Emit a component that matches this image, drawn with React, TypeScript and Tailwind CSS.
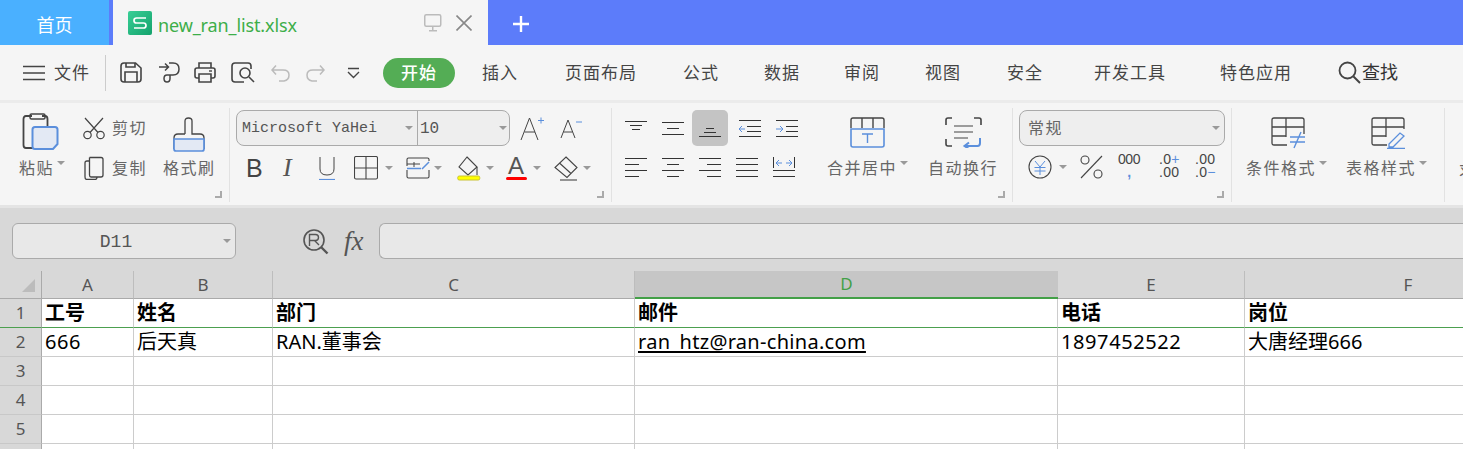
import React from 'react';

const cjk = "font-['Noto_Sans','Noto_Sans_CJK_SC',sans-serif]";
const blue = '#5b8fdc';
const ink = '#444444';

type IcoProps = { w: number; h: number; className?: string; children: React.ReactNode };

const Ico: React.FC<IcoProps> = ({ w, h, className, children }) => (
    <svg
        width={w}
        height={h}
        viewBox={`0 0 ${w} ${h}`}
        fill="none"
        stroke={ink}
        strokeWidth={1.5}
        className={`shrink-0 block ${className ?? ''}`}
    >
        {children}
    </svg>
);

const Caret: React.FC<{ className?: string }> = ({ className }) => (
    <div className={`w-0 h-0 border-x-[4px] border-x-transparent border-t-[4px] border-t-[#999999] shrink-0 ${className ?? ''}`} />
);

const Corner: React.FC<{ className?: string }> = ({ className }) => (
    <div className={`w-[7px] h-[7px] border-r-2 border-b-2 border-[#aaaaaa] ${className ?? ''}`} />
);

const MenuItem: React.FC<{ label: string; ml: string }> = ({ label, ml }) => (
    <span className={`text-[17px] tracking-[1px] text-[#444444] whitespace-nowrap ${ml}`}>{label}</span>
);

/* lines for the alignment buttons: [x1, x2, y] */
const AlignIcon: React.FC<{ lines: number[][]; className?: string; children?: React.ReactNode }> = ({ lines, className, children }) => (
    <Ico w={24} h={22} className={className}>
        {lines.map((l, i) => (
            <path key={i} d={`M${l[0]} ${l[2]}.5H${l[1]}`} strokeWidth={1} stroke="#333333" />
        ))}
        {children}
    </Ico>
);

const Top = () => (
    <div className="h-[45px] bg-[#5c7cfa] flex shrink-0">
        <div className="w-[109px] bg-[#4ab0ff] flex items-center justify-center text-white text-[18px] pt-[6px]">首页</div>
        <div className="w-[375px] ml-[4px] bg-[#f5f5f5] flex items-center">
            <svg width="24" height="24" viewBox="0 0 24 24" className="ml-[15px] shrink-0">
                <defs>
                    <linearGradient id="xl" x1="0" y1="0" x2="1" y2="1">
                        <stop offset="0" stopColor="#38cf96" />
                        <stop offset="1" stopColor="#14a26c" />
                    </linearGradient>
                </defs>
                <rect width="24" height="24" rx="2" fill="url(#xl)" />
                <path d="M18 7H8.5Q6 7 6 9.5T8.5 12H15.5Q18 12 18 14.5T15.5 17H6" fill="none" stroke="#fff" strokeWidth="1.7" />
            </svg>
            <span className="ml-[6px] text-[18px] tracking-[-0.12px] text-[#3dae49] w-[260px] pt-[5px]">new_ran_list.xlsx</span>
            <Ico w={18} h={18} className="ml-[6px]">
                <rect x=".75" y=".75" width="16" height="11.5" rx="1.5" stroke="#bbbbbb" />
                <path d="M8.75 12.5V16.5M5 16.75H13" stroke="#bbbbbb" />
            </Ico>
            <Ico w={16} h={16} className="ml-[14px]">
                <path d="M.5 .5L15.5 15.5M15.5 .5L.5 15.5" stroke="#888888" strokeWidth={1.6} />
            </Ico>
        </div>
        <Ico w={18} h={18} className="ml-[24px] mt-[15px]">
            <path d="M9 1V17M1 9H17" stroke="#ffffff" strokeWidth={2.4} />
        </Ico>
    </div>
);

const MenuBar = () => (
    <div className="h-[55px] bg-[#f5f5f5] flex items-center shrink-0">
        <Ico w={22} h={16} className="ml-[23px]">
            <path d="M0 1.5H22M0 8H22M0 14.5H22" strokeWidth={1.6} />
        </Ico>
        <span className="ml-[9px] text-[17px] tracking-[1px] text-[#444444] w-[36px] whitespace-nowrap">文件</span>
        <div className="ml-[15px] w-px h-[36px] bg-[#cccccc]" />
        <Ico w={22} h={21} className="ml-[14px]">
            <path d="M4 1H15.5L21 6V17Q21 20 18 20H4Q1 20 1 17V4Q1 1 4 1Z" strokeWidth={1.6} />
            <path d="M5 20V10H17V20M6 1V5H15V1" strokeWidth={1.6} />
        </Ico>
        <Ico w={22} h={22} className="ml-[16px]">
            <path d="M1 5H10M7 1.5L10.5 5L7 8.5M11 1H15Q21 1 21 7T15 13H9Q6 13 6 16.5T9 20Q12 20 12 16.5V13" strokeWidth={1.5} />
        </Ico>
        <Ico w={22} h={21} className="ml-[14px]">
            <path d="M5 6V1H17V6M5 16H3Q1 16 1 14V8Q1 6 3 6H19Q21 6 21 8V14Q21 16 19 16H17M5 12H17V20H5Z" strokeWidth={1.6} />
            <path d="M15 9H18" strokeWidth={1.4} />
        </Ico>
        <Ico w={24} h={22} className="ml-[15px]">
            <path d="M20 7V4Q20 1 17 1H4Q1 1 1 4V17Q1 20 4 20H13" strokeWidth={1.6} />
            <circle cx="14" cy="11" r="5" strokeWidth={1.6} />
            <path d="M18 15L23 20" strokeWidth={1.6} />
        </Ico>
        <Ico w={19} h={18} className="ml-[16px]">
            <path d="M1 6H12Q18 6 18 11T13 17H8M5 1.5L1 6L5 10.5" stroke="#bbbbbb" strokeWidth={1.5} />
        </Ico>
        <Ico w={19} h={18} className="ml-[16px]">
            <path d="M18 6H7Q1 6 1 11T6 17H11M14 1.5L18 6L14 10.5" stroke="#bbbbbb" strokeWidth={1.5} />
        </Ico>
        <Ico w={13} h={12} className="ml-[22px]">
            <path d="M1 1.5H12M1 5L6.5 10.5L12 5" strokeWidth={1.4} />
        </Ico>
        <div className="ml-[23px] w-[72px] h-[30px] rounded-full bg-[#54ad55] flex items-center justify-center text-white text-[17px] font-medium tracking-[1px]">开始</div>
        <MenuItem label="插入" ml="ml-[27px]" />
        <MenuItem label="页面布局" ml="ml-[47px]" />
        <MenuItem label="公式" ml="ml-[46px]" />
        <MenuItem label="数据" ml="ml-[45px]" />
        <MenuItem label="审阅" ml="ml-[44px]" />
        <MenuItem label="视图" ml="ml-[45px]" />
        <MenuItem label="安全" ml="ml-[46px]" />
        <MenuItem label="开发工具" ml="ml-[51px]" />
        <MenuItem label="特色应用" ml="ml-[54px]" />
        <Ico w={23} h={23} className="ml-[46px]">
            <circle cx="9.5" cy="9.5" r="8" strokeWidth={1.8} />
            <path d="M15.5 15.5L22 22" strokeWidth={2} />
        </Ico>
        <span className="text-[18px] text-[#333333] ml-[1px] whitespace-nowrap">查找</span>
    </div>
);

const Sep = () => <div className="w-px h-[94px] bg-[#e2e2e2] shrink-0 mt-[5px]" />;

const Label: React.FC<{ children: React.ReactNode; caret?: boolean; className?: string }> = ({ children, caret, className }) => (
    <div className={`flex items-start whitespace-nowrap text-[16px] leading-[22px] tracking-[1.5px] text-[#666666] ${className ?? ''}`}>
        {children}
        {caret && <Caret className="mt-[4px] ml-[3px]" />}
    </div>
);

const ClipboardGroup = () => (
    <div className="w-[229px] h-full flex shrink-0 relative">
        <div className="ml-[19px] w-[50px]">
            <Ico w={38} h={38} className="ml-[3px] mt-[10px]">
                <path d="M10 3H4Q1.5 3 1.5 6V32Q1.5 35 4 35H11M20 3H23Q25.5 3 25.5 6V13" strokeWidth={1.8} />
                <rect x="8" y="1" width="15" height="5" rx="1.5" strokeWidth={1.5} />
                <path d="M13 14H33Q35.5 14 35.5 16.5V31L31 36H13Q10.5 36 10.5 33.5V16.5Q10.5 14 13 14Z" fill="#e3e9f4" stroke={blue} strokeWidth={2} />
            </Ico>
            <Label caret className="mt-[6px]">粘贴</Label>
        </div>
        <div className="ml-[14px] w-[70px] pt-[13px]">
            <div className="flex items-center h-[24px]">
                <Ico w={22} h={23}>
                    <circle cx="4.5" cy="18" r="3.7" strokeWidth={1.2} />
                    <circle cx="17.5" cy="18" r="3.7" strokeWidth={1.2} />
                    <path d="M7 15.5L20 1M15 15.5L2 1" strokeWidth={1.2} />
                </Ico>
                <span className="ml-[7px] text-[16px] tracking-[1.5px] text-[#666666] whitespace-nowrap">剪切</span>
            </div>
            <div className="flex items-center h-[24px] mt-[16px]">
                <Ico w={20} h={24} className="ml-[1px]">
                    <path d="M5.5 1.5H17Q19 1.5 19 3.5V19Q19 21 17 21H7" strokeWidth={1.3} />
                    <path d="M5.5 1.5V19Q5.5 21 7 21M5 5H3Q1 5 1 7V21Q1 23.5 3 23.5H11Q13 23.5 13 21" strokeWidth={1.3} />
                </Ico>
                <span className="ml-[8px] text-[16px] tracking-[1.5px] text-[#666666] whitespace-nowrap">复制</span>
            </div>
        </div>
        <div className="ml-[10px]">
            <Ico w={32} h={35} className="ml-[10px] mt-[14px]">
                <path d="M12 17V4Q12 1 15.5 1T19 4V17H27Q31 17 31 21V32M1 32V21Q1 17 5 17H12" strokeWidth={1.3} />
                <path d="M1 22H31V32Q31 34 29 34H3Q1 34 1 32Z" fill="#e3e9f4" stroke={blue} strokeWidth={1.7} />
            </Ico>
            <Label className="mt-[5px] tracking-[1.4px]">格式刷</Label>
        </div>
        <Corner className="absolute right-[7px] bottom-[7px]" />
    </div>
);

const ComboBox: React.FC<{ className?: string; children: React.ReactNode }> = ({ className, children }) => (
    <div className={`h-[36px] border border-[#aaaaaa] rounded-[8px] bg-[#eeeeee] flex items-center shrink-0 ${className ?? ''}`}>{children}</div>
);

const FontGroup = () => (
    <div className="w-[381px] h-full shrink-0 relative pl-[6px] pt-[7px]">
        <div className="flex items-center">
            <ComboBox className="w-[274px] font-['Liberation_Mono',monospace] text-[15px] text-[#555555]">
                <span className="ml-[5px] w-[163px] whitespace-nowrap pt-[3px]">Microsoft YaHei</span>
                <Caret />
                <div className="ml-[4px] w-px h-[34px] bg-[#aaaaaa]" />
                <span className="ml-[2px] w-[79px] text-[16px] pt-[2px]">10</span>
                <Caret />
            </ComboBox>
            <Ico w={24} h={26} className="ml-[10px]">
                <path d="M1 25L9.5 3L18 25M4.5 17H15" strokeWidth={1} />
                <path d="M18 5.5H24M21 2.5V8.5" stroke={blue} strokeWidth={1} />
            </Ico>
            <Ico w={22} h={22} className="ml-[16px]">
                <path d="M1 21L8 3L15 21M3.5 15H12.5" strokeWidth={1} />
                <path d="M16 5H22" stroke={blue} strokeWidth={1} />
            </Ico>
        </div>
        <div className="flex items-center mt-[7px] h-[30px]">
            <span className="ml-[10px] w-[20px] font-['Liberation_Sans',sans-serif] text-[25px] leading-none text-[#444444]">B</span>
            <span className="ml-[17px] w-[18px] font-['Liberation_Serif',serif] italic text-[26px] leading-none text-[#555555]">I</span>
            <Ico w={18} h={24} className="ml-[17px]">
                <path d="M2 1V13Q2 19 9 19T16 13V1" strokeWidth={1} />
                <path d="M1 23.5H17" stroke={blue} strokeWidth={1.2} />
            </Ico>
            <Ico w={24} h={24} className="ml-[18px]">
                <rect x=".5" y=".5" width="23" height="22.5" rx="1.5" strokeWidth={1.1} />
                <path d="M12 1V23M1 12H23" strokeWidth={1.1} />
            </Ico>
            <Caret className="ml-[7px]" />
            <Ico w={24} h={22} className="ml-[13px]">
                <path d="M1 9V2.5Q1 1 2.5 1H21.5Q23 1 23 2.5V4M1 13V19.5Q1 21 2.5 21H21.5Q23 21 23 19.5V13" strokeWidth={1.1} />
                <path d="M8 5V10M1 7H14" strokeWidth={1} />
                <path d="M1 11.5H15M16 12L23 5" stroke={blue} strokeWidth={1.5} />
            </Ico>
            <Caret className="ml-[4px]" />
            <Ico w={24} h={25} className="ml-[15px]">
                <path d="M10 1L20 11L11 19L2 11Z" strokeWidth={1.1} />
                <path d="M20 11V19" strokeWidth={1.1} />
                <rect x=".75" y="20" width="22" height="4" rx="1.5" fill="#ffff00" stroke="#c9c235" strokeWidth={1} />
            </Ico>
            <Caret className="ml-[5px]" />
            <div className="ml-[11px] flex flex-col items-center w-[22px]">
                <span className="font-['Liberation_Sans',sans-serif] text-[24px] leading-[20px] text-[#555555] font-light">A</span>
                <div className="w-[21px] h-[3px] bg-[#ff0000] rounded-full mt-[1px]" />
            </div>
            <Caret className="ml-[6px]" />
            <Ico w={24} h={25} className="ml-[13px]">
                <path d="M12 1L23 11.5L13 21.5L1 11.5Z M6 7.5L17 17.5" strokeWidth={1.1} />
                <path d="M6 24H23" strokeWidth={1.1} />
            </Ico>
            <Caret className="ml-[5px]" />
        </div>
        <Corner className="absolute right-[7px] bottom-[7px]" />
    </div>
);

const AlignGroup = () => (
    <div className="w-[400px] h-full shrink-0 relative flex">
        <div className="pt-[7px] ml-[13px] w-[190px]">
            <div className="flex items-center h-[36px]">
                <AlignIcon lines={[[0, 22, 4], [5, 17, 8], [7, 15, 12]]} />
                <AlignIcon className="ml-[13px]" lines={[[0, 22, 5], [5, 17, 11], [0, 22, 17]]} />
                <div className="ml-[6px] w-[36px] h-[36px] rounded-[5px] bg-[#c4c4c4] flex items-center justify-center shrink-0">
                    <AlignIcon className="ml-[2px]" lines={[[7, 15, 11], [5, 17, 15], [0, 22, 19]]} />
                </div>
                <Ico w={23} h={21} className="ml-[11px]">
                    <path d="M0 2.5H22M8 8.5H22M8 13.5H22M0 18.5H22" strokeWidth={1} stroke="#333333" />
                    <path d="M6 11H0M3 8L0 11L3 14" stroke={blue} strokeWidth={1} />
                </Ico>
                <Ico w={23} h={21} className="ml-[14px]">
                    <path d="M0 2.5H22M10 8.5H22M10 13.5H22M0 18.5H22" strokeWidth={1} stroke="#333333" />
                    <path d="M0 11H7M4 8L7 11L4 14" stroke={blue} strokeWidth={1} />
                </Ico>
            </div>
            <div className="flex items-center h-[24px] mt-[10px]">
                <AlignIcon lines={[[0, 22, 1], [0, 14, 7], [0, 22, 13], [0, 14, 19]]} />
                <AlignIcon className="ml-[13px]" lines={[[0, 22, 1], [5, 17, 7], [0, 22, 13], [5, 17, 19]]} />
                <AlignIcon className="ml-[13px]" lines={[[0, 22, 1], [8, 22, 7], [0, 22, 13], [8, 22, 19]]} />
                <AlignIcon className="ml-[13px]" lines={[[0, 22, 1], [0, 22, 7], [0, 22, 13], [0, 22, 19]]} />
                <AlignIcon className="ml-[13px]" lines={[[0, 22, 13], [0, 22, 19]]}>
                    <path d="M.5 0V11M21.5 0V11" strokeWidth={1} stroke="#333333" />
                    <path d="M9 6H3M6 3L3 6L6 9M13 6H19M16 3L19 6L16 9" stroke={blue} strokeWidth={1} />
                </AlignIcon>
            </div>
        </div>
        <div className="ml-[12px] w-[95px] flex flex-col">
            <Ico w={35} h={31} className="ml-[23px] mt-[14px]">
                <path d="M1 11V3Q1 1 3 1H32Q34 1 34 3V11M12 1V11M23 1V11" strokeWidth={1.4} />
                <path d="M1 12H34V28Q34 30 32 30H3Q1 30 1 28Z" stroke={blue} strokeWidth={1.6} />
                <path d="M12 17H23M17.5 17V26" stroke={blue} strokeWidth={1.4} />
            </Ico>
            <Label caret className="mt-[9px]">合并居中</Label>
        </div>
        <div className="ml-[6px] flex flex-col">
            <Ico w={37} h={31} className="ml-[17px] mt-[14px]">
                <path d="M7 1H3Q1 1 1 3V8M29 1H34Q36 1 36 3V8M1 22V27Q1 29 3 29H7" strokeWidth={1.6} />
                <path d="M9 9H28M9 15H28M9 21H23" strokeWidth={1.1} />
                <path d="M35 21V26Q35 29 32.5 29H20M24 25.5L19.5 29L24 32" stroke={blue} strokeWidth={2} />
            </Ico>
            <Label className="mt-[9px]">自动换行</Label>
        </div>
        <Corner className="absolute right-[7px] bottom-[7px]" />
    </div>
);

const NumberGroup = () => (
    <div className="w-[218px] h-full shrink-0 relative pl-[6px] pt-[7px]">
        <ComboBox className="w-[206px] justify-between text-[16px] tracking-[1.5px] text-[#666666]">
            <span className="ml-[8px]">常规</span>
            <Caret className="mr-[4px]" />
        </ComboBox>
        <div className="flex items-center h-[30px] mt-[6px]">
            <Ico w={24} h={24} className="ml-[9px]">
                <circle cx="12" cy="12" r="11" strokeWidth={1.1} />
                <path d="M7 6L12 12L17 6M6.5 12.5H17.5M6.5 16H17.5M12 12V20" stroke={blue} strokeWidth={1} />
            </Ico>
            <Caret className="ml-[7px]" />
            <Ico w={23} h={24} className="ml-[13px]">
                <circle cx="5" cy="5" r="4" strokeWidth={1.1} />
                <circle cx="18" cy="19" r="4" strokeWidth={1.1} />
                <path d="M1 23L22 1" strokeWidth={1.1} />
            </Ico>
            <div className="ml-[15px] w-[22px] h-[28px] font-['Liberation_Sans',sans-serif] text-[#444444] text-[14px] tracking-[-0.5px] flex flex-col items-center">
                <span className="h-[13px] leading-[13px]">000</span>
                <span className="h-[13px] leading-[13px] text-[#5b8fdc] font-bold">,</span>
            </div>
            <div className="ml-[19px] w-[22px] h-[28px] font-['Liberation_Sans',sans-serif] text-[#444444] text-[14px] tracking-[0.3px] flex flex-col whitespace-nowrap">
                <span className="h-[13px] leading-[13px]">.0<span className="text-[#5b8fdc]">+</span></span>
                <span className="h-[13px] leading-[13px]">.00</span>
            </div>
            <div className="ml-[14px] w-[22px] h-[28px] font-['Liberation_Sans',sans-serif] text-[#444444] text-[14px] tracking-[0.3px] flex flex-col whitespace-nowrap">
                <span className="h-[13px] leading-[13px]">.00</span>
                <span className="h-[13px] leading-[13px]">.0<span className="text-[#5b8fdc]">−</span></span>
            </div>
        </div>
        <Corner className="absolute right-[7px] bottom-[7px]" />
    </div>
);

const StyleGroup = () => (
    <div className="w-[212px] h-full shrink-0 flex">
        <div className="ml-[14px] w-[100px] flex flex-col">
            <Ico w={35} h={32} className="ml-[25px] mt-[14px]">
                <path d="M16 28H3Q1 28 1 26V3Q1 1 3 1H31Q33 1 33 3V17M1 10H33M15 1V20M1 19H15" strokeWidth={1.3} />
                <path d="M19 20H34M19 25H34M30 15L23 31" stroke={blue} strokeWidth={1.4} />
            </Ico>
            <Label caret className="mt-[8px]">条件格式</Label>
        </div>
        <div className="flex flex-col">
            <Ico w={35} h={32} className="ml-[25px] mt-[14px]">
                <path d="M16 28H3Q1 28 1 26V3Q1 1 3 1H31Q33 1 33 3V12M1 10H33M15 1V20M1 19H15" strokeWidth={1.3} />
                <path d="M18 27L29 16L33 19L22 30H18ZM16 31.5H34" stroke={blue} strokeWidth={1.3} />
            </Ico>
            <Label caret className="mt-[8px]">表格样式</Label>
        </div>
    </div>
);

const Ribbon = () => (
    <div className="h-[105px] bg-[#f5f5f5] border-t-[3px] border-[#ebebeb] flex overflow-hidden shrink-0">
        <ClipboardGroup />
        <Sep />
        <FontGroup />
        <Sep />
        <AlignGroup />
        <Sep />
        <NumberGroup />
        <Sep />
        <StyleGroup />
        <Sep />
        <Label className="ml-[14px] mt-[56px]">求和</Label>
    </div>
);

const FormulaBar = () => (
    <div className="h-[63px] flex items-start shrink-0 pt-[15px]">
        <div className="ml-[12px] w-[224px] h-[36px] border border-[#aaaaaa] rounded-[6px] bg-[#e8e8e8] flex items-center shrink-0">
            <span className="w-[206px] text-center font-['Liberation_Mono',monospace] text-[18px] text-[#555555] pt-[3px]">D11</span>
            <Caret className="ml-[4px]" />
        </div>
        <Ico w={26} h={26} className="ml-[67px] mt-[6px]">
            <circle cx="11" cy="11" r="10" strokeWidth={1.6} stroke="#555555" />
            <path d="M6.5 17V5.5H12.5Q15.5 5.5 15.5 8.5T12.5 11.5H6.5M11.5 11.5L16 16" strokeWidth={1.4} stroke="#555555" />
            <path d="M18 18L24.5 24.5" strokeWidth={2.4} stroke="#555555" />
        </Ico>
        <span className="ml-[15px] w-[35px] font-['Liberation_Serif',serif] italic text-[27px] leading-[36px] text-[#555555]">fx</span>
        <div className="flex-1 h-[36px] border border-r-0 border-[#aaaaaa] rounded-l-[6px] bg-[#e8e8e8]" />
    </div>
);

const gridCols = 'grid grid-cols-[42px_92px_139px_362px_423px_187px_327px]';

const ColHead: React.FC<{ label: string; selected?: boolean }> = ({ label, selected }) => (
    <div
        className={
            selected
                ? 'h-[28px] bg-[#c6c6c6] border-b-2 border-[#43a047] flex items-center justify-center text-[17px] text-[#43a047]'
                : 'h-[28px] border-r border-b border-r-[#bdbdbd] border-b-[#aaaaaa] flex items-center justify-center text-[17px] text-[#555555]'
        }
    >
        {label}
    </div>
);

const rows: string[][] = [
    ['工号', '姓名', '部门', '邮件', '电话', '岗位'],
    ['666', '后天真', 'RAN.董事会', 'ran_htz@ran-china.com', '1897452522', '大唐经理666'],
    ['', '', '', '', '', ''],
    ['', '', '', '', '', ''],
    ['', '', '', '', '', ''],
    ['', '', '', '', '', ''],
];

const cellSpacing = (cell: string) => {
    if (cell.includes('@')) return 'underline underline-offset-2 tracking-[0.3px]';
    if (/^\d+$/.test(cell)) return 'tracking-[0.6px]';
    return '';
};

const Sheet = () => (
    <div className="flex-1 min-h-0 overflow-hidden bg-white">
        <div className={`${gridCols} bg-[#d8d8d8]`}>
            <div className="h-[28px] border-r border-b border-r-[#aaaaaa] border-b-[#aaaaaa] flex items-end">
                <div className="ml-[22px] mb-[6px] w-0 h-0 border-l-[13px] border-l-transparent border-b-[13px] border-b-[#bcbcbc]" />
            </div>
            {['A', 'B', 'C', 'D', 'E', 'F'].map((c) => (
                <ColHead key={c} label={c} selected={c === 'D'} />
            ))}
        </div>
        {rows.map((row, r) => (
            <div key={r} className={gridCols}>
                <div className={`h-[29px] bg-[#d8d8d8] border-r border-r-[#aaaaaa] border-b flex items-center justify-center text-[17px] text-[#555555] ${r === 0 ? 'border-b-[#4ca04f]' : 'border-b-[#c8c8c8]'}`}>
                    {r + 1}
                </div>
                {row.map((cell, c) => (
                    <div
                        key={c}
                        className={`h-[29px] border-r border-r-[#cccccc] border-b pl-[3px] text-[20px] leading-[28px] text-black whitespace-nowrap overflow-hidden ${r === 0 ? 'border-b-[#4ca04f] font-bold' : 'border-b-[#cccccc]'} ${cellSpacing(cell)}`}
                    >
                        {cell}
                    </div>
                ))}
            </div>
        ))}
    </div>
);

export default function App() {
    return (
        <div className={`h-[449px] w-full flex flex-col overflow-hidden bg-[#d8d8d8] ${cjk}`}>
            <Top />
            <MenuBar />
            <Ribbon />
            <div className="h-[3px] bg-[#e4e4e4] shrink-0" />
            <FormulaBar />
            <Sheet />
        </div>
    );
}
